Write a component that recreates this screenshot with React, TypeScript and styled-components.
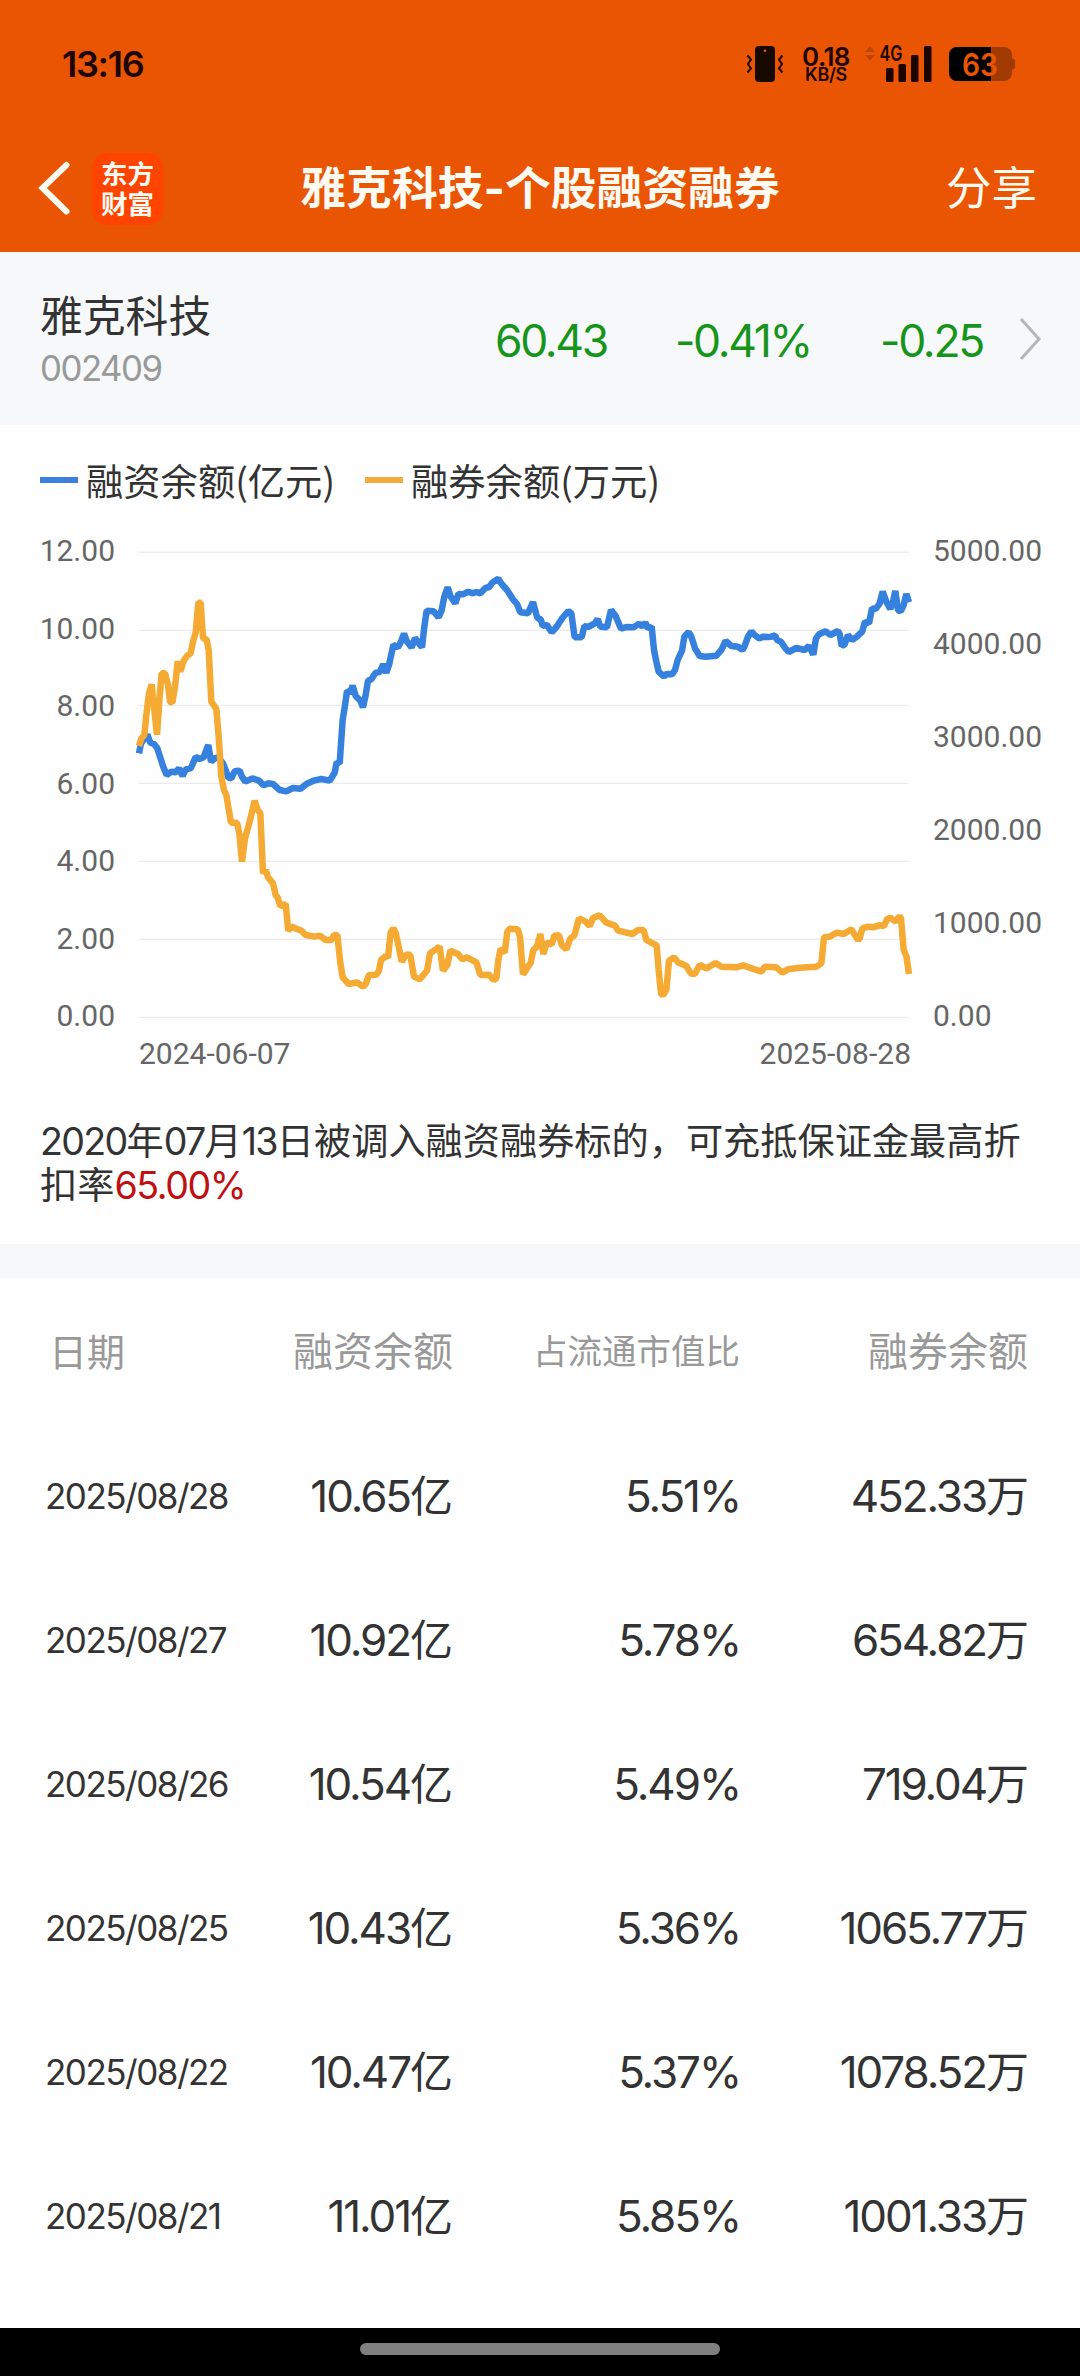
import React from "react";
import styled, { createGlobalStyle } from "styled-components";

const GlobalStyle = createGlobalStyle`
  *, *::before, *::after { box-sizing: border-box; }
  body {
    margin: 0;
    background: #fff;
    color: #333;
    font-family: Inter, "Noto Sans CJK SC", sans-serif;
  }
`;

const Screen = styled.div`
  width: 1080px;
  height: 2376px;
  display: flex;
  flex-direction: column;
  overflow: hidden;
  background: #fefefe;
`;

const Header = styled.header`
  height: 252px;
  flex: none;
  display: flex;
  flex-direction: column;
  background: #ea5504;
`;

const StatusBar = styled.div`
  height: 126px;
  padding: 2px 64px 0 62px;
  display: flex;
  align-items: center;
  justify-content: space-between;
  color: #1c0500;
`;

const Clock = styled.span`
  font-size: 36px;
  font-weight: 600;
  letter-spacing: -1.3px;
`;

const StatusIcons = styled.div`
  display: flex;
  align-items: center;
  height: 36px;
`;

const NetSpeed = styled.div`
  width: 52px;
  margin: 0 13px 0 16px;
  display: flex;
  flex-direction: column;
  align-items: center;
  font-weight: 600;
`;

const SpeedValue = styled.span`
  font-size: 26px;
  line-height: 21px;
  letter-spacing: -0.5px;
`;

const SpeedUnit = styled.span`
  font-size: 18px;
  line-height: 16px;
  letter-spacing: -0.3px;
`;

const Signal = styled.svg`
  margin-right: 17px;
  overflow: visible;
  font: 600 21px Inter, sans-serif;
`;

const BatteryIcon = styled.svg`
  font: 600 31px Inter, sans-serif;
`;

const NavBar = styled.div`
  height: 126px;
  display: grid;
  grid-template-columns: 240px 1fr 240px;
  align-items: center;
  color: #fffaf2;
`;

const NavLeft = styled.div`
  display: flex;
  align-items: center;
  gap: 20px;
  padding-left: 38px;
`;

const Logo = styled.div`
  width: 71px;
  height: 72px;
  padding-bottom: 1px;
  border-radius: 15px;
  display: flex;
  flex-direction: column;
  align-items: center;
  justify-content: center;
  background: #ff4400;
  font-size: 26.5px;
  line-height: 30px;
  font-weight: 700;
`;

const Title = styled.h1`
  margin: 0;
  text-align: center;
  white-space: nowrap;
  font-size: 45.8px;
  line-height: 60px;
  font-weight: 700;
`;

const Share = styled.span`
  padding-right: 43px;
  text-align: right;
  font-size: 45.5px;
  line-height: 60px;
`;

const Quote = styled.section`
  height: 173px;
  flex: none;
  padding: 4px 38px 0 40px;
  display: flex;
  align-items: center;
  background: #f6f8fa;
`;

const StockName = styled.div`
  width: 340px;
  display: flex;
  flex-direction: column;
  font-size: 42.8px;
  line-height: 56px;
`;

const StockCode = styled.span`
  font-size: 34.8px;
  line-height: 47px;
  letter-spacing: -1.5px;
  color: #999;
`;

const Figure = styled.span<{ $width: number }>`
  width: ${(p) => p.$width}px;
  text-align: right;
  font-size: 44.5px;
  letter-spacing: -2.3px;
  color: #17951b;
`;

const ChevronBox = styled.div`
  flex: 1;
  padding-bottom: 4px;
  display: flex;
  justify-content: flex-end;
`;

const Legend = styled.div`
  height: 110px;
  flex: none;
  padding: 0 40px;
  display: flex;
  align-items: center;
`;

const LegendItem = styled.div<{ $color: string }>`
  display: flex;
  align-items: center;
  gap: 8px;
  margin-right: 30px;
  font-size: 37.3px;
  font-family: "Noto Sans CJK SC", sans-serif;

  &::before {
    content: "";
    width: 38px;
    height: 6px;
    background: ${(p) => p.$color};
  }
`;

const ChartRow = styled.div`
  height: 480px;
  flex: none;
  display: grid;
  grid-template-columns: 139px 771px 170px;
  font-family: Roboto, sans-serif;
  font-size: 30px;
  color: #666;
`;

const Axis = styled.div<{ $side: "left" | "right" }>`
  height: 497px;
  padding: ${(p) => (p.$side === "left" ? "0 24px 0 0" : "0 0 0 23px")};
  display: flex;
  flex-direction: column;
  justify-content: space-between;
  text-align: ${(p) => (p.$side === "left" ? "right" : "left")};
  line-height: 32px;
`;

const Plot = styled.svg`
  display: block;
  overflow: visible;
`;

const DateAxis = styled.div`
  height: 63px;
  flex: none;
  padding: 22px 169px 0 139px;
  display: flex;
  justify-content: space-between;
  font-family: Roboto, sans-serif;
  font-size: 30px;
  line-height: 34px;
  color: #666;
`;

const Note = styled.p`
  height: 166px;
  flex: none;
  margin: 0;
  padding: 42px 40px 0;
  font-size: 37.2px;
  line-height: 44px;
  white-space: nowrap;
`;

const NoteDigits = styled.span<{ $accent?: boolean }>`
  font-size: 37.6px;
  letter-spacing: ${(p) => (p.$accent ? "-1.4px" : "-1.7px")};
  color: ${(p) => (p.$accent ? "#c00f12" : "inherit")};
`;

const Divider = styled.div`
  height: 34px;
  flex: none;
  background: #f6f8fa;
`;

const Table = styled.div`
  flex: 1;
  display: flex;
  flex-direction: column;
`;

const Row = styled.div`
  height: 144px;
  flex: none;
  padding: 3px 51px 0 45px;
  display: grid;
  grid-template-columns: 200px 208px 287px 1fr;
  align-items: center;
  text-align: right;
  white-space: nowrap;
`;

const HeadRow = styled(Row)`
  color: #999;
  padding: 0 52px 2px 49px;
  grid-template-columns: 197px 207px 287px 1fr;
`;

const HeadCell = styled.span<{ $size: number; $left?: boolean }>`
  font-size: ${(p) => p.$size}px;
  text-align: ${(p) => (p.$left ? "left" : "right")};
`;

const DateCell = styled.span`
  text-align: left;
  font-size: 35px;
  letter-spacing: -1.5px;
`;

const ValueCell = styled.span`
  font-size: 44px;
  line-height: 60px;
  letter-spacing: -2.1px;
`;

const Unit = styled.span`
  font-size: 43px;
  letter-spacing: 0;
`;

const HomeBar = styled.footer`
  height: 48px;
  flex: none;
  padding-top: 15px;
  display: flex;
  justify-content: center;
  background: #000;

  &::before {
    content: "";
    width: 360px;
    height: 12px;
    border-radius: 6px;
    background: #808080;
  }
`;

/* Chart geometry: 3 units per CSS pixel; each leg is a stretch of the line starting at a given x. */
const leg = (offset: number, points: string) =>
  points
    .split(" ")
    .map((p) => p.split(",").map(Number))
    .map(([x, y]) => `${x + offset},${y}`)
    .join(" ");

const marginLine = [
  leg(0, "58,670 64,640 83,614 92,638 103,642 113,655 121,680 130,708 141,735 155,725 168,727 178,715 189,738 198,718 213,715 220,700 228,681 240,687 252,682 258,665 266,645 274,695 285,685 295,682 310,700 320,725 326,743 335,745 345,724 360,722 367,740 377,755 398,745 418,752 432,766 445,760 460,762 480,780 500,784 520,774 543,776 560,762 585,751 605,747 630,752 645,728 651,697 660,700 669,570 677,520 682,483 692,487 699,467 708,498 722,512 730,532 737,500 745,452 755,448 768,428 780,426 791,403 801,427"),
  leg(780, "10,405 20,428 28,405 41,345 55,352 64,335 73,311 82,335 96,352 106,324 116,338 127,352 134,290 141,242 162,244 177,262 186,240 194,200 204,172 213,200 227,220 236,192 250,193 266,185 278,190 290,186 302,190 318,173 328,172 338,158 356,146 366,162 382,180 400,208 412,222 422,247 445,250 460,216 473,264 483,268 489,287 502,285 516,307 530,292 548,264 566,243 575,250 585,322 606,322 614,289 628,290 645,280 654,267 662,290 682,292 694,240 708,258 724,296 740,291 762,292 778,281"),
  leg(1560, "8,290 17,278 25,295 36,290 43,360 50,395 57,425 73,440 80,432 97,433 106,420 114,390 127,362 134,320 147,306 155,320 166,355 180,378 198,380 230,377 245,360 258,333 275,348 295,350 308,360 315,348 325,320 335,305 345,315 358,325 372,320 385,321 395,320 406,316 412,330 424,335 435,352 447,366 470,354 495,360 508,348 521,374 529,325 538,313 558,304 572,315 595,303 600,312 606,348 615,343 625,315 637,330 652,320 668,304 676,275 688,280 697,235 708,237 720,220 729,185 740,215 752,237 760,215 767,183 775,240 783,244 792,225 800,192 808,217"),
].join(" ");

const shortLine = [
  leg(0, "58,648 65,625 74,615 80,555 88,490 96,463 104,540 112,614 120,500 126,430 136,430 145,465 151,515 158,518 166,470 174,394 182,425 192,392 203,377 213,370 220,335 228,308 236,218 243,218 250,325 261,328 267,360 275,515 290,537 297,620 305,740 313,780 320,795 334,878 352,878 359,910 367,995 376,925 390,875 405,812 414,840 422,850 430,1030 438,1020 445,1042 460,1060 468,1095 474,1103 482,1128 498,1122 506,1203 514,1190 530,1196 545,1202 558,1215 585,1220 600,1217 618,1230 635,1230 643,1215 653,1215 662,1300 669,1342 687,1362 712,1357 730,1370 738,1362 748,1335 770,1334 778,1322 784,1290"),
  leg(780, "18,1278 25,1283 33,1208 41,1195 48,1208 57,1250 66,1295 80,1273 92,1275 103,1340 120,1348 142,1322 151,1270 180,1250 190,1322 203,1305 212,1262 235,1272 248,1288 262,1282 290,1297 302,1335 328,1334 342,1350 350,1345 356,1290 363,1256 375,1268 383,1205 390,1196 414,1198 421,1220 430,1333 440,1318 453,1298 461,1260 472,1250 482,1212 491,1272 501,1238 516,1243 524,1217 538,1216 546,1245 560,1258 572,1225 584,1217 598,1165 618,1175 630,1188 640,1164 660,1156 680,1178 706,1187 715,1202 758,1212 775,1200"),
  leg(1560, "12,1200 20,1230 35,1238 51,1246 57,1320 64,1390 70,1396 80,1380 88,1292 103,1282 115,1297 140,1308 154,1331 166,1331 180,1305 200,1315 228,1299 245,1310 290,1312 310,1306 345,1318 366,1325 375,1310 410,1312 428,1328 445,1318 480,1313 530,1310 545,1300 553,1222 570,1220 592,1208 612,1212 635,1198 655,1230 660,1225 668,1195 685,1190 700,1192 718,1186 733,1188 742,1168 752,1163 768,1175 780,1158 784,1165 792,1260 800,1278 808,1332"),
].join(" ");

const gridLines = [67, 301, 526, 760, 994, 1228, 1462];
const leftTicks = ["12.00", "10.00", "8.00", "6.00", "4.00", "2.00", "0.00"];
const rightTicks = ["5000.00", "4000.00", "3000.00", "2000.00", "1000.00", "0.00"];

const rows = [
  ["2025/08/28", "10.65", "5.51%", "452.33"],
  ["2025/08/27", "10.92", "5.78%", "654.82"],
  ["2025/08/26", "10.54", "5.49%", "719.04"],
  ["2025/08/25", "10.43", "5.36%", "1065.77"],
  ["2025/08/22", "10.47", "5.37%", "1078.52"],
  ["2025/08/21", "11.01", "5.85%", "1001.33"],
];

const VibrateIcon = () => (
  <svg width="38" height="36" viewBox="0 0 38 36" fill="none">
    <rect x="9" y="0" width="20" height="36" rx="4" fill="#170800" />
    <circle cx="19" cy="4.8" r="1.3" fill="#ea5504" />
    <path d="M1.500 9.500L5 13.500l-3 4.500 3 4.500-3.500 4M36.500 9.500L33 13.500l3 4.500-3 4.500 3.500 4" stroke="#1c0500" strokeWidth="2" />
  </svg>
);

const SignalIcon = () => (
  <Signal width="67" height="36" viewBox="0 0 67 36" fill="#1c0500">
    <path d="M5 0l5 6H0zM5 14.500L0 9h10z" fill="#bf4505" />
    <text x="14.500" y="15" textLength="23" lengthAdjust="spacingAndGlyphs">4G</text>
    <rect x="21" y="22" width="7.500" height="14" rx="1.500" />
    <rect x="33.500" y="18" width="7.500" height="18" rx="1.500" />
    <rect x="46" y="9" width="7.500" height="27" rx="1.500" />
    <rect x="59" y="0" width="7.500" height="36" rx="1.500" />
  </Signal>
);

const Battery = () => (
  <BatteryIcon width="67" height="34" viewBox="0 0 67 34">
    <path d="M8 0h47a8 8 0 0 1 8 8v3q3 1 3 3v6q0 2-3 3v3a8 8 0 0 1-8 8H8a8 8 0 0 1-8-8V8a8 8 0 0 1 8-8z" fill="#a23b03" />
    <path d="M8 0h34v34H8a8 8 0 0 1-8-8V8a8 8 0 0 1 8-8z" fill="#000" />
    <text x="13" y="28.500" textLength="36" lengthAdjust="spacingAndGlyphs" fill="#ea5504">63</text>
  </BatteryIcon>
);

export default function App() {
  return (
    <Screen lang="zh-CN">
      <GlobalStyle />
      <Header>
        <StatusBar>
          <Clock>13:16</Clock>
          <StatusIcons>
            <VibrateIcon />
            <NetSpeed>
              <SpeedValue>0.18</SpeedValue>
              <SpeedUnit>KB/S</SpeedUnit>
            </NetSpeed>
            <SignalIcon />
            <Battery />
          </StatusIcons>
        </StatusBar>
        <NavBar>
          <NavLeft>
            <svg width="34" height="56" viewBox="0 0 34 56" fill="none">
              <path d="M28.500 4L4.500 27l24 23.500" stroke="#fffaf2" strokeWidth="6" strokeLinecap="round" />
            </svg>
            <Logo>
              <span>东方</span>
              <span>财富</span>
            </Logo>
          </NavLeft>
          <Title>雅克科技-个股融资融券</Title>
          <Share>分享</Share>
        </NavBar>
      </Header>

      <Quote>
        <StockName>
          雅克科技
          <StockCode>002409</StockCode>
        </StockName>
        <Figure $width={227}>60.43</Figure>
        <Figure $width={204}>-0.41%</Figure>
        <Figure $width={172}>-0.25</Figure>
        <ChevronBox>
          <svg width="24" height="44" viewBox="0 0 24 44" fill="none">
            <path d="M3 2l18 20L3 42" stroke="#b4b6b8" strokeWidth="3" />
          </svg>
        </ChevronBox>
      </Quote>

      <Legend>
        <LegendItem $color="#3a80dc">融资余额(亿元)</LegendItem>
        <LegendItem $color="#f0ac3c">融券余额(万元)</LegendItem>
      </Legend>

      <ChartRow>
        <Axis $side="left">
          {leftTicks.map((t) => (
            <span key={t}>{t}</span>
          ))}
        </Axis>
        <Plot width="771" height="500" viewBox="58 15 2313 1500">
          {gridLines.map((y) => (
            <path key={y} d={`M58 ${y}H2367`} stroke="#ebebeb" strokeWidth="4" />
          ))}
          <polyline points={marginLine} fill="none" stroke="#3781de" strokeWidth="19.500" strokeLinejoin="bevel" />
          <polyline points={shortLine} fill="none" stroke="#f5ab33" strokeWidth="19.500" strokeLinejoin="bevel" />
        </Plot>
        <Axis $side="right">
          {rightTicks.map((t) => (
            <span key={t}>{t}</span>
          ))}
        </Axis>
      </ChartRow>
      <DateAxis>
        <span>2024-06-07</span>
        <span>2025-08-28</span>
      </DateAxis>

      <Note>
        <NoteDigits>2020</NoteDigits>年<NoteDigits>07</NoteDigits>月<NoteDigits>13</NoteDigits>
        日被调入融资融券标的，可充抵保证金最高折
        <br />
        扣率<NoteDigits $accent>65.00%</NoteDigits>
      </Note>
      <Divider />

      <Table>
        <HeadRow>
          <HeadCell $size={38} $left>日期</HeadCell>
          <HeadCell $size={40}>融资余额</HeadCell>
          <HeadCell $size={34.5}>占流通市值比</HeadCell>
          <HeadCell $size={40}>融券余额</HeadCell>
        </HeadRow>
        {rows.map(([date, margin, ratio, short]) => (
          <Row key={date}>
            <DateCell>{date}</DateCell>
            <ValueCell>
              {margin}
              <Unit>亿</Unit>
            </ValueCell>
            <ValueCell>{ratio}</ValueCell>
            <ValueCell>
              {short}
              <Unit>万</Unit>
            </ValueCell>
          </Row>
        ))}
      </Table>
      <HomeBar />
    </Screen>
  );
}
